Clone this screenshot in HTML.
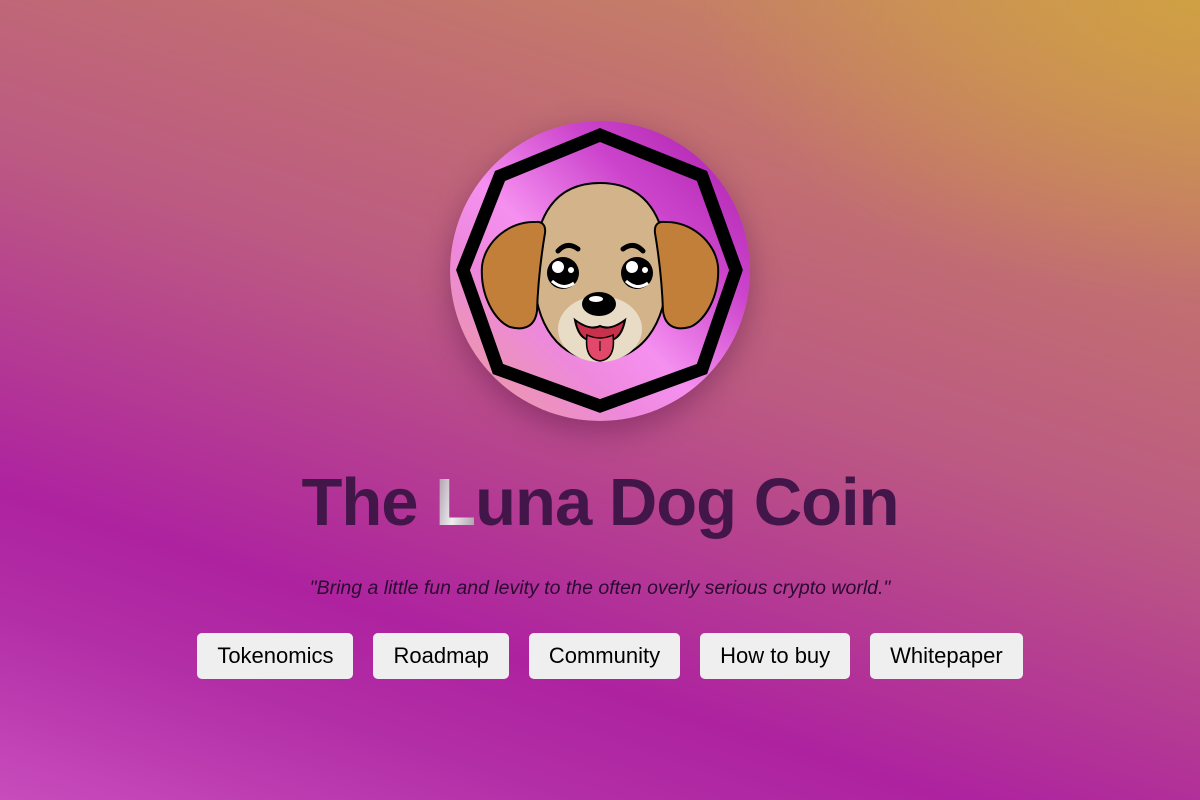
<!DOCTYPE html>
<html><head><meta charset="utf-8"><style>
html,body{margin:0;padding:0}
body{width:1200px;height:800px;overflow:hidden;position:relative;font-family:"Liberation Sans",Arial,sans-serif;
background:
radial-gradient(ellipse 500px 300px at 1200px 0px, rgba(210,165,60,0.75), rgba(210,165,60,0) 100%),
linear-gradient(198deg,#c9925a 0%,#c27070 24%,#bc5a82 45%,#ae22a0 74%,#b22ea6 84%,#c84cbc 100%);}
.logo{position:absolute;left:450px;top:121px;width:300px;height:300px;border-radius:50%;box-shadow:0 10px 30px rgba(60,0,60,0.35)}
h1{position:absolute;left:0;width:1200px;top:464px;margin:0;text-align:center;font-size:67px;font-weight:bold;color:#43164a;letter-spacing:-1px}
h1 .l{background:linear-gradient(100deg,#9e8aa0,#eeeeee 50%,#a898a8);-webkit-background-clip:text;background-clip:text;color:transparent}
.q{position:absolute;left:0;width:1200px;top:577px;text-align:center;font-style:italic;font-size:19.5px;color:#2a0a30}
.btns{position:absolute;top:633px;left:10px;width:1200px;display:flex;justify-content:center;gap:20px}
.btns div{height:46px;line-height:46px;background:#efefef;border-radius:5px;font-size:22px;color:#000;padding:0 20px}
</style></head><body>
<svg class="logo" viewBox="0 0 300 300">
<defs>
<linearGradient id="g" x1="0" y1="1" x2="1" y2="0">
<stop offset="0" stop-color="#e8a090"/><stop offset="0.3" stop-color="#ee88dc"/><stop offset="0.45" stop-color="#f590f0"/><stop offset="0.7" stop-color="#cc44cc"/><stop offset="1" stop-color="#a81ca8"/>
</linearGradient>
</defs>
<circle cx="150" cy="150" r="150" fill="url(#g)"/>
<polygon points="150,14 252,55 286,149 252,248 150,285 48,248 13,149 50,55" fill="none" stroke="#000" stroke-width="13" stroke-linejoin="miter"/>
<path d="M150,62 C195,62 217,95 217,150 C217,205 190,239 150,239 C110,239 84,205 84,150 C84,95 105,62 150,62Z" fill="#d3b48a" stroke="#000" stroke-width="2"/>
<path d="M85,101 C60,100 35,120 32,145 C30,175 45,200 60,206 C75,210 85,205 87,190 C88,160 92,130 95,112 C96,104 92,100 85,101Z" fill="#c17f3a" stroke="#000" stroke-width="2"/>
<path d="M215,101 C240,100 265,120 268,145 C270,175 255,200 240,206 C225,210 215,205 213,190 C212,160 208,130 205,112 C204,104 208,100 215,101Z" fill="#c17f3a" stroke="#000" stroke-width="2"/>
<ellipse cx="150" cy="208" rx="42" ry="33" fill="#e8dcc6"/>
<path d="M108,130 Q117,120 128,128" stroke="#000" stroke-width="5" fill="none" stroke-linecap="round"/>
<path d="M173,128 Q184,120 193,130" stroke="#000" stroke-width="5" fill="none" stroke-linecap="round"/>
<circle cx="113" cy="152" r="16" fill="#000"/><circle cx="187" cy="152" r="16" fill="#000"/>
<circle cx="108" cy="146" r="6" fill="#fff"/><circle cx="121" cy="149" r="3" fill="#fff"/>
<circle cx="182" cy="146" r="6" fill="#fff"/><circle cx="195" cy="149" r="3" fill="#fff"/>
<path d="M102,160 Q113,170 124,162" stroke="#fff" stroke-width="3" fill="none"/>
<path d="M176,160 Q187,170 198,162" stroke="#fff" stroke-width="3" fill="none"/>
<path d="M125,199 Q130,225 150,218 Q170,225 175,199 Q160,210 150,205 Q140,210 125,199Z" fill="#c8314a" stroke="#000" stroke-width="2"/>
<path d="M137,214 Q134,238 150,240 Q166,238 163,214 Q150,220 137,214Z" fill="#e2486a" stroke="#000" stroke-width="1.5"/>
<line x1="150" y1="220" x2="150" y2="230" stroke="#000" stroke-width="1"/>
<ellipse cx="149" cy="183" rx="17" ry="12" fill="#000"/>
<ellipse cx="146" cy="178" rx="7" ry="3" fill="#fff"/>
</svg>
<h1>The <span class="l">L</span>una Dog Coin</h1>
<div class="q">"Bring a little fun and levity to the often overly serious crypto world."</div>
<div class="btns"><div>Tokenomics</div><div>Roadmap</div><div>Community</div><div>How to buy</div><div>Whitepaper</div></div>
</body></html>
